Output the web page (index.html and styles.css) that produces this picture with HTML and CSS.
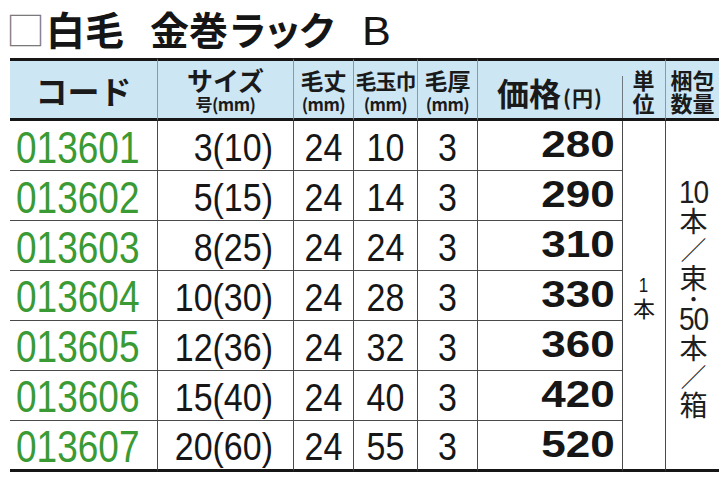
FILE: index.html
```html
<!DOCTYPE html>
<html lang="ja">
<head>
<meta charset="utf-8">
<title>白毛 金巻ラック B</title>
<link rel="stylesheet" href="styles.css">
</head>
<body>
<div class="page">
  <h1 class="title"><span class="box">□</span>白毛<span class="sp"></span>金巻<span class="kana">ラック</span><span class="sp2"></span><span class="b">B</span></h1>
  <table class="spec">
    <colgroup>
      <col class="c-code"><col class="c-size"><col class="c-len"><col class="c-wid"><col class="c-thk"><col class="c-price"><col class="c-unit"><col class="c-pack">
    </colgroup>
    <thead>
      <tr>
        <th class="h-code">コード</th>
        <th><div class="h-main">サイズ</div><div class="h-sub">号(mm)</div></th>
        <th><div class="h-mid">毛丈</div><div class="h-sub">(mm)</div></th>
        <th><div class="h-mid narrow">毛玉巾</div><div class="h-sub">(mm)</div></th>
        <th><div class="h-mid">毛厚</div><div class="h-sub">(mm)</div></th>
        <th class="h-price"><span class="big">価格</span><span class="yen">(円)</span></th>
        <th class="h-unit"><div class="stack"><span>単</span><span>位</span></div></th>
        <th class="h-pack"><div class="stack"><span>梱包</span><span>数量</span></div></th>
      </tr>
    </thead>
    <tbody>
      <tr>
        <td class="code"><span>013601</span></td>
        <td class="size"><span>3(10)</span></td>
        <td class="mid"><span>24</span></td>
        <td class="mid"><span>10</span></td>
        <td class="mid"><span>3</span></td>
        <td class="price"><span>280</span></td>
        <td class="unit" rowspan="7"><div class="ucol"><span class="one">1</span><span class="hon">本</span></div></td>
        <td class="pack" rowspan="7">
          <div class="vt">
            <span class="d">10</span><span class="k">本</span><span class="sl">／</span><span class="k">束</span><span class="dot">・</span><span class="d">50</span><span class="k">本</span><span class="sl">／</span><span class="k">箱</span>
          </div>
        </td>
      </tr>
      <tr>
        <td class="code"><span>013602</span></td>
        <td class="size"><span>5(15)</span></td>
        <td class="mid"><span>24</span></td>
        <td class="mid"><span>14</span></td>
        <td class="mid"><span>3</span></td>
        <td class="price"><span>290</span></td>
      </tr>
      <tr>
        <td class="code"><span>013603</span></td>
        <td class="size"><span>8(25)</span></td>
        <td class="mid"><span>24</span></td>
        <td class="mid"><span>24</span></td>
        <td class="mid"><span>3</span></td>
        <td class="price"><span>310</span></td>
      </tr>
      <tr>
        <td class="code"><span>013604</span></td>
        <td class="size"><span>10(30)</span></td>
        <td class="mid"><span>24</span></td>
        <td class="mid"><span>28</span></td>
        <td class="mid"><span>3</span></td>
        <td class="price"><span>330</span></td>
      </tr>
      <tr>
        <td class="code"><span>013605</span></td>
        <td class="size"><span>12(36)</span></td>
        <td class="mid"><span>24</span></td>
        <td class="mid"><span>32</span></td>
        <td class="mid"><span>3</span></td>
        <td class="price"><span>360</span></td>
      </tr>
      <tr>
        <td class="code"><span>013606</span></td>
        <td class="size"><span>15(40)</span></td>
        <td class="mid"><span>24</span></td>
        <td class="mid"><span>40</span></td>
        <td class="mid"><span>3</span></td>
        <td class="price"><span>420</span></td>
      </tr>
      <tr class="last">
        <td class="code"><span>013607</span></td>
        <td class="size"><span>20(60)</span></td>
        <td class="mid"><span>24</span></td>
        <td class="mid"><span>55</span></td>
        <td class="mid"><span>3</span></td>
        <td class="price"><span>520</span></td>
      </tr>
    </tbody>
  </table>
</div>
</body>
</html>
```

FILE: styles.css
```css
* { box-sizing: border-box; }
html, body { margin: 0; padding: 0; background: #ffffff; }
body {
  width: 727px;
  height: 483px;
  overflow: hidden;
  font-family: "Noto Sans CJK JP", "Liberation Sans", sans-serif;
  color: #141414;
}
.page { width: 727px; }

.title {
  margin: 0;
  height: 58px;
  padding: 3px 0 0 6px;
  font-size: 39px;
  line-height: 50px;
  font-weight: 700;
  white-space: nowrap;
  color: #151515;
}
.title .box { color: #7a7a7a; font-weight: 300; margin-right: 1px; }
.title .sp { display: inline-block; width: 26px; }
.title .sp2 { display: inline-block; width: 30px; }
.title .kana { letter-spacing: -4px; }
.title .b { font-family: "Liberation Sans", sans-serif; font-size: 40px; font-weight: 400; display: inline-block; transform: scaleX(1.08); }

.spec {
  margin-left: 10px;
  border-collapse: separate;
  border-spacing: 0;
  table-layout: fixed;
  width: 709px;
}
.c-code { width: 147px; }
.c-size { width: 136px; }
.c-len { width: 60px; }
.c-wid { width: 64px; }
.c-thk { width: 60px; }
.c-price { width: 145px; }
.c-unit { width: 43px; }
.c-pack { width: 54px; }

.spec th {
  height: 63px;
  padding: 0;
  background: #cde6f4;
  border-top: 3px solid #161616;
  border-bottom: 3px solid #161616;
  border-left: 1px solid #8a99a3;
  font-weight: 700;
  text-align: center;
  vertical-align: middle;
  color: #1a1a1a;
  line-height: 1;
}
.spec th.h-code { border-left: none; font-size: 32px; }
.h-main { font-size: 26px; line-height: 26px; margin-top: 1px; }
.h-mid { font-size: 23px; line-height: 25px; margin-top: 2px; }
.h-mid.narrow { font-size: 21px; letter-spacing: -1px; }
.h-sub { font-size: 17px; line-height: 18px; margin-top: 2px; font-weight: 700; letter-spacing: -0.5px; }
.spec th.h-price { white-space: nowrap; padding-top: 4px; }
.h-price .big { font-size: 32px; }
.h-price .yen { font-size: 21px; letter-spacing: 1px; margin-left: 2px; }
.spec th.h-unit {
  border-left: none;
  background: linear-gradient(#6d7880, #6d7880) left bottom / 1px 42px no-repeat, #cde6f4;
}
.stack { display: flex; flex-direction: column; align-items: center; font-size: 22px; line-height: 23px; padding-top: 2px; }

.spec td {
  height: 50px;
  padding: 0;
  border-left: 1px solid #4a4a4a;
  border-bottom: 1px solid #4a4a4a;
  font-family: "Liberation Sans", sans-serif;
  font-size: 34px;
  line-height: 1;
  vertical-align: middle;
  color: #161616;
  white-space: nowrap;
}
.spec tr.last td { height: 51px; border-bottom: 3px solid #161616; }
.spec td span { display: inline-block; }

.spec td.code {
  border-left: none;
  padding: 4px 0 0 6px;
  text-align: left;
  font-size: 37px;
  color: #3a9a33;
}
.spec td.code span { transform: scaleY(1.2); }
.spec td.size { text-align: right; padding: 2px 20px 0 0; }
.spec td.size span,
.spec td.mid span { transform: scaleY(1.15); }
.spec td.mid { text-align: center; padding-top: 2px; }
.spec td.price {
  text-align: right;
  padding: 0 7px 2px 0;
  font-size: 37px;
  font-weight: 700;
}
.spec td.price span { transform: scaleX(1.19); transform-origin: right center; }

.spec td.unit,
.spec td.pack {
  border-bottom: 3px solid #161616;
  text-align: center;
  vertical-align: middle;
}
.ucol { display: flex; flex-direction: column; align-items: center; padding-top: 4px; }
.ucol .one { font-size: 20px; line-height: 21px; font-family: "Liberation Sans", sans-serif; transform: scaleX(0.85); }
.ucol .hon { font-size: 22px; line-height: 23px; font-family: "Noto Sans CJK JP", sans-serif; }

.vt {
  display: flex;
  flex-direction: column;
  align-items: center;
  padding: 8px 0 0 2px;
  font-family: "Noto Sans CJK JP", sans-serif;
  color: #1e1e1e;
}
.vt .d { font-family: "Liberation Sans", sans-serif; font-size: 28px; line-height: 27px; letter-spacing: -1px; transform: scaleY(1.1); }
.vt .k { font-size: 28px; line-height: 29px; }
.vt .sl { font-size: 26px; line-height: 28px; font-weight: 300; }
.vt .dot { font-size: 20px; line-height: 14px; }
```
